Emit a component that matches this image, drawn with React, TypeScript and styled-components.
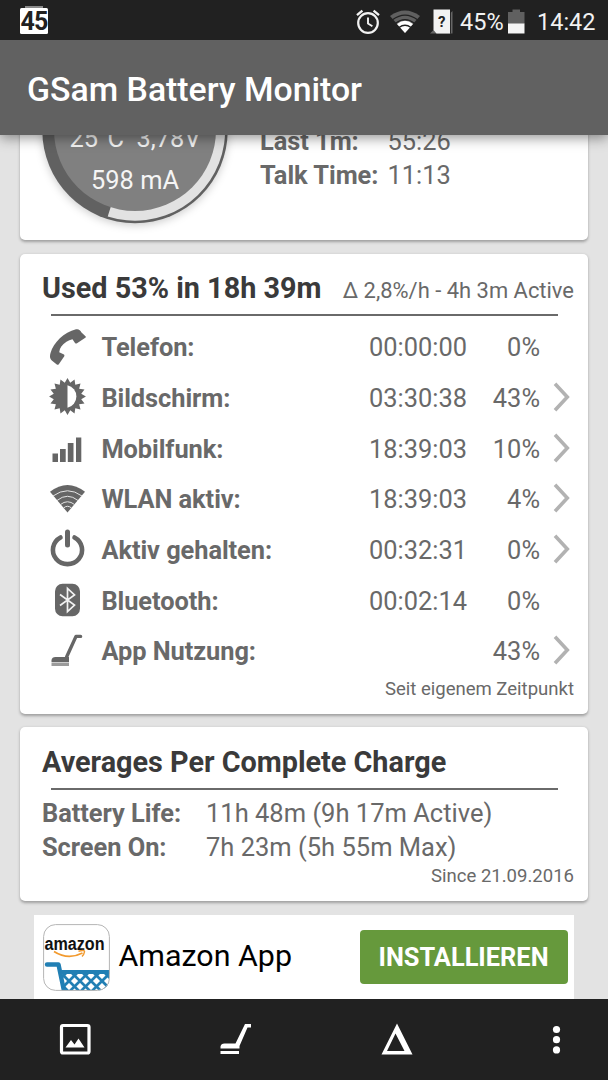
import React from "react";
import styled, { createGlobalStyle } from "styled-components";

const GlobalStyle = createGlobalStyle`
  * { box-sizing: border-box; }
  body { margin: 0; background: #e3e3e3; font-family: Roboto, "Noto Sans", sans-serif; }
  svg { display: block; flex: none; }
`;

const Screen = styled.div`
  width: 608px;
  height: 1080px;
  display: flex;
  flex-direction: column;
  overflow: hidden;
  background: #e3e3e3;
  color: #696969;
  white-space: nowrap;
`;

const StatusBar = styled.div`
  height: 40px;
  flex: none;
  display: flex;
  align-items: center;
  justify-content: space-between;
  padding: 3px 13px 0 20px;
  background: #212121;
  color: #f2f2f2;
  font-size: 23.5px;
  position: relative;
  z-index: 3;
`;

const StatusIcons = styled.div`
  display: flex;
  align-items: center;
`;

const StatusText = styled.span<{ $left: number; $width: number }>`
  margin-left: ${(p) => p.$left}px;
  width: ${(p) => p.$width}px;
  line-height: 36px;
`;

const LevelBadge = styled.div`
  width: 28px;
  height: 26px;
  margin-top: -1px;
  border-radius: 1.5px;
  background: #fff;
  color: #212121;
  font-size: 25px;
  line-height: 28px;
  font-weight: 700;
  text-align: center;
  letter-spacing: -0.8px;
  position: relative;
  &::before {
    content: "";
    position: absolute;
    left: 5px;
    top: -2px;
    width: 18px;
    height: 2px;
    background: #8a8a8a;
  }
`;

const AppBar = styled.header`
  height: 95px;
  flex: none;
  display: flex;
  align-items: center;
  padding: 3px 27px 0;
  background: #616161;
  color: #fff;
  font-size: 33.8px;
  font-weight: 500;
  box-shadow: 0 3px 12px rgba(0, 0, 0, 0.42);
  position: relative;
  z-index: 2;
`;

const Content = styled.main`
  height: 864px;
  flex: none;
  display: flex;
  flex-direction: column;
  padding: 0 20px;
`;

const Card = styled.section<{ $height: number; $gap: number }>`
  height: ${(p) => p.$height}px;
  margin-bottom: ${(p) => p.$gap}px;
  flex: none;
  border-radius: 5px;
  background: #fff;
  box-shadow: 0 1.5px 3px rgba(0, 0, 0, 0.3);
`;

const SummaryCard = styled(Card)`
  margin-top: -115px;
  padding: 17px 0 0 22px;
  display: flex;
`;

const Gauge = styled.div`
  width: 186px;
  height: 187px;
  position: relative;
  color: #f5f5f5;
`;

const GaugeReadings = styled.div`
  position: absolute;
  left: 0;
  right: 0;
  top: 80px;
  text-align: center;
  font-size: 25.4px;
  line-height: 42px;
  white-space: pre;
`;

const StatTable = styled.dl<{ $label: number; $size: number }>`
  margin: 0;
  display: grid;
  grid-template-columns: ${(p) => p.$label}px auto;
  grid-auto-rows: 34px;
  align-content: start;
  font-size: ${(p) => p.$size}px;
  line-height: 34px;
`;

const StatLabel = styled.dt`
  font-weight: 700;
  font-size: 25.4px;
  letter-spacing: -0.03px;
`;

const StatValue = styled.dd`
  margin: 0;
`;

const SummaryStats = styled(StatTable)`
  margin: 87px 0 0 32px;
`;

const CardHeading = styled.div<{ $top: number }>`
  height: 34px;
  margin: ${(p) => p.$top}px 14px 0 22px;
  display: flex;
  align-items: baseline;
  justify-content: space-between;
  line-height: 34px;
`;

const Title = styled.h2`
  margin: 0;
  font-size: 28.8px;
  font-weight: 700;
  color: #3a3a3a;
`;

const Rate = styled.span`
  font-size: 21.95px;
`;

const Divider = styled.div<{ $top: number }>`
  height: 2px;
  margin: ${(p) => p.$top}px 30.5px 0;
  background: #6a6a6a;
`;

const UsageList = styled.div`
  margin-top: 6px;
`;

const UsageRow = styled.div`
  height: 50.67px;
  padding-left: 29px;
  display: grid;
  grid-template-columns: 52.4px 226.1px 140px 72.5px 42px;
  align-items: center;
  font-size: 25.4px;
  line-height: 50px;
`;

const UsageName = styled.span`
  font-weight: 700;
  letter-spacing: -0.06px;
`;

const UsageTime = styled.span`
  text-align: right;
  padding-right: 0.5px;
`;

const UsagePercent = styled.span`
  text-align: right;
`;

const Trail = styled.span`
  padding-left: 13px;
`;

const Since = styled.div<{ $top: number }>`
  margin: ${(p) => p.$top}px 14px 0 0;
  text-align: right;
  font-size: 18.55px;
  line-height: 22px;
`;

const AverageStats = styled(StatTable)`
  margin: 6px 0 0 22px;
`;

const Ad = styled.div`
  height: 84px;
  flex: none;
  margin: 0 14px;
  padding: 0 6.5px 0 9px;
  display: flex;
  align-items: center;
  background: #fff;
  color: #000;
`;

const AdName = styled.span`
  flex: 1;
  margin-left: 8.5px;
  padding-bottom: 4px;
  font-size: 30.4px;
`;

const InstallButton = styled.button`
  width: 208px;
  height: 54px;
  margin-bottom: 1px;
  padding: 0;
  border: 0;
  border-radius: 4px;
  background: #66993c;
  color: #fff;
  font: 700 25.4px/54px Roboto, sans-serif;
`;

const BottomBar = styled.nav`
  height: 81px;
  flex: none;
  display: grid;
  grid-template-columns: 155px 161px 161px 1fr;
  align-items: center;
  background: #212121;
  position: relative;
  z-index: 2;
`;

const BarAction = styled.div<{ $left: number }>`
  padding-left: ${(p) => p.$left}px;
`;

const ICON = "#666";

const AlarmIcon = () => (
  <svg width="24" height="26" viewBox="0 0 24 26" fill="none" stroke="#f2f2f2">
    <circle cx="12" cy="14" r="9.8" strokeWidth="2.2" />
    <path d="M12 8.5v6l4.4 2.8" strokeWidth="1.9" />
    <path d="M1 6.2l5.4-4.5M23 6.2l-5.4-4.5" strokeWidth="2.4" />
  </svg>
);

const StatusWifiIcon = () => (
  <svg width="30" height="23" viewBox="0 0 30 23" style={{ marginLeft: 10 }}>
    <path d="M0 6Q15-5 30 6L15 23Z" fill="#606060" />
    <path d="M7 14Q15 7.500 23 14L15 23Z" fill="#fff" />
    <g fill="none" stroke="#212121" strokeWidth="1.300">
      <path d="M2.500 9.800Q15 .5 27.500 9.800M5.500 13.300Q15 6 24.500 13.300M9 17.500Q15 13 21 17.500" />
    </g>
  </svg>
);

const SimIcon = () => (
  <svg width="24" height="25" viewBox="0 0 24 25" style={{ marginLeft: 10 }}>
    <path d="M0 24.500L22.500 2V24.500Z" fill="#666" />
    <path d="M3.500 .5H20V24.500H6.500L3.500 21Z" fill="#f2f2f2" />
    <path d="M20.500 3v21.500" stroke="#212121" strokeWidth=".9" />
    <text x="11.700" y="17.500" fontSize="15" fontWeight="700" textAnchor="middle" fill="#212121">?</text>
  </svg>
);

const BatteryIcon = () => (
  <svg width="17" height="25" viewBox="0 0 17 25">
    <path d="M0 3H4.500V.5H12V3H16.500V15H0Z" fill="#606060" />
    <path d="M0 14.500H16.500V24.500H0Z" fill="#f5f5f5" />
  </svg>
);

const PhoneIcon = () => (
  <svg width="37" height="38" viewBox="0 0 37 38" fill={ICON}>
    <path d="M27 1.300C29.500.700 31.500 2 32.500 4.500L36.500 8.300Q37.200 9 36.300 9.800L28 15.300Q27 16 26 15L23.500 11.200Q17 12.500 12.300 18.500Q10.500 21 10.200 24.200L14.500 26.300Q15.800 27 15.300 28.300L9.800 36.300Q8.800 37.200 7.800 36.500L2.800 32.500C.7 30.500.6 28 1.600 24.800C4.500 15 15 4 27 1.300Z" />
  </svg>
);

const SCREEN_STAR = Array.from({ length: 32 }, (_, i) => {
  const a = (i * Math.PI) / 16 - Math.PI / 2;
  const r = i % 2 ? 14 : 18.4;
  return `${(18.5 + r * Math.cos(a)).toFixed(2)},${(18.5 + r * Math.sin(a)).toFixed(2)}`;
}).join(" ");

const BrightnessIcon = () => (
  <svg width="37" height="39" viewBox="0 0 37 39">
    <polygon points={SCREEN_STAR} fill={ICON} />
    <path d="M18.500 7.300A11.500 11.500 0 0 1 18.500 29.700Z" fill="#fff" />
  </svg>
);

const SignalIcon = () => (
  <svg width="37" height="26" viewBox="0 0 37 26" fill={ICON}>
    <path d="M3.500 17.500h5.500V26H3.500ZM11 13h5.700V26H11ZM18.800 7h5.700V26H18.800ZM27 1.500h5.300V26H27Z" />
  </svg>
);

const WifiIcon = () => (
  <svg width="37" height="31" viewBox="0 0 37 31">
    <path d="M1 7.800Q18.500-5.800 36 7.800L18.500 28.500Z" fill={ICON} />
    <g fill="none" stroke="#e4e4e4" strokeWidth="1">
      <path d="M4 12Q18.500 1.500 33 12M8 16.500Q18.500 8 29 16.500M11.500 20.500Q18.500 15 25.500 20.500M14.500 24Q18.500 20.500 22.500 24" />
    </g>
  </svg>
);

const PowerIcon = () => (
  <svg width="37" height="42" viewBox="0 0 37 42" fill="none" stroke={ICON} strokeLinecap="round">
    <path d="M11.500 8.500A14.600 14.200 0 1 0 25.500 8.500" strokeWidth="4.600" />
    <path d="M18.500 3v13" strokeWidth="5" />
  </svg>
);

const BluetoothIcon = () => (
  <svg width="37" height="36" viewBox="0 0 37 36">
    <rect x="6" y=".7" width="25" height="32.600" rx="7.500" fill={ICON} />
    <path d="M11 11.500L25.500 22L18.500 28.500V5.500L25.500 12L11 22.500" fill="none" stroke="#f2f2f2" strokeWidth="1.700" />
  </svg>
);

const VacuumIcon = () => (
  <svg width="37" height="36" viewBox="0 0 37 36" fill={ICON}>
    <path d="M31.600 3.400H27L17.600 24" fill="none" stroke={ICON} strokeWidth="3.400" strokeLinejoin="round" strokeLinecap="round" />
    <path d="M2.500 29V27Q3 24 6.500 24H20V29Z" />
    <path d="M2.500 29.500H20V33H2.500Z" opacity=".65" />
  </svg>
);

const ChevronIcon = () => (
  <svg width="17" height="32" viewBox="0 0 17 32" fill="none" stroke="#b2b2b2" strokeWidth="3.600">
    <path d="M2 1.700L14.300 15L2 28.300" />
  </svg>
);

const AmazonIcon = () => (
  <svg width="67" height="67" viewBox="0 0 67 67">
    <defs>
      <clipPath id="tile"><rect x=".5" y=".5" width="66" height="66" rx="12" /></clipPath>
      <clipPath id="basket"><path d="M18.500 46H66V67H22.500Z" /></clipPath>
    </defs>
    <rect x=".6" y=".6" width="65.800" height="65.800" rx="12" fill="#fff" />
    <text x="1.500" y="25.500" fontFamily="Liberation Sans, sans-serif" fontSize="18" fontWeight="700" textLength="60" lengthAdjust="spacingAndGlyphs" fill="#111">amazon</text>
    <path d="M11 27.500Q25 36.500 39.500 29" fill="none" stroke="#f29a2e" strokeWidth="1.700" />
    <path d="M35.500 27.200Q42 25.500 41.500 27.800Q41 30.500 39 32.500" fill="none" stroke="#f29a2e" strokeWidth="1.400" />
    <g clipPath="url(#tile)" fill="none" stroke="#217fb4">
      <path d="M4 40.500H15.500L21 67" strokeWidth="4.400" strokeLinecap="round" strokeLinejoin="round" />
      <path d="M17.500 48H67" strokeWidth="4.200" />
      <g clipPath="url(#basket)" strokeWidth="2.700">
        {[-7, 4, 15, 26, 37, 48, 59, 70].map((x) => (
          <path key={x} d={`M${x} 46l22 22M${x + 22} 46l-22 22`} />
        ))}
      </g>
    </g>
    <rect x=".6" y=".6" width="65.800" height="65.800" rx="12" fill="none" stroke="#b5b5b5" />
  </svg>
);

const GaugeDial = () => (
  <svg width="186" height="187" viewBox="0 0 186 187" style={{ overflow: "visible", filter: "drop-shadow(0 2px 4px rgba(0,0,0,.2))" }}>
    <circle cx="93" cy="93.500" r="92.700" fill="#616161" />
    <path d="M93 93.500L93 3.300A90.200 90.200 0 1 1 65.700 179.500Z" fill="#e2e2e2" />
    <circle cx="93" cy="93" r="81" fill="#808080" />
  </svg>
);

const usage = [
  { icon: <PhoneIcon />, name: "Telefon:", time: "00:00:00", percent: "0%", more: false },
  { icon: <BrightnessIcon />, name: "Bildschirm:", time: "03:30:38", percent: "43%", more: true },
  { icon: <SignalIcon />, name: "Mobilfunk:", time: "18:39:03", percent: "10%", more: true },
  { icon: <WifiIcon />, name: "WLAN aktiv:", time: "18:39:03", percent: "4%", more: true },
  { icon: <PowerIcon />, name: "Aktiv gehalten:", time: "00:32:31", percent: "0%", more: true },
  { icon: <BluetoothIcon />, name: "Bluetooth:", time: "00:02:14", percent: "0%", more: false },
  { icon: <VacuumIcon />, name: "App Nutzung:", time: "", percent: "43%", more: true },
];

export default function App() {
  return (
    <>
      <GlobalStyle />
      <Screen>
        <StatusBar>
          <LevelBadge>45</LevelBadge>
          <StatusIcons>
            <AlarmIcon />
            <StatusWifiIcon />
            <SimIcon />
            <StatusText $left={6} $width={48}>45%</StatusText>
            <BatteryIcon />
            <StatusText $left={12} $width={58}>14:42</StatusText>
          </StatusIcons>
        </StatusBar>
        <AppBar>GSam Battery Monitor</AppBar>
        <Content>
          <SummaryCard $height={220} $gap={14}>
            <Gauge>
              <GaugeDial />
              <GaugeReadings>{"25°C  3,78V\n598 mA"}</GaugeReadings>
            </Gauge>
            <SummaryStats $label={127.5} $size={25.4}>
              <StatLabel>Last 1m:</StatLabel>
              <StatValue>55:26</StatValue>
              <StatLabel>Talk Time:</StatLabel>
              <StatValue>11:13</StatValue>
            </SummaryStats>
          </SummaryCard>

          <Card $height={460} $gap={13}>
            <CardHeading $top={17}>
              <Title>Used 53% in 18h 39m</Title>
              <Rate>Δ 2,8%/h - 4h 3m Active</Rate>
            </CardHeading>
            <Divider $top={9} />
            <UsageList>
              {usage.map((row) => (
                <UsageRow key={row.name}>
                  {row.icon}
                  <UsageName>{row.name}</UsageName>
                  <UsageTime>{row.time}</UsageTime>
                  <UsagePercent>{row.percent}</UsagePercent>
                  <Trail>{row.more && <ChevronIcon />}</Trail>
                </UsageRow>
              ))}
            </UsageList>
            <Since $top={1}>Seit eigenem Zeitpunkt</Since>
          </Card>

          <Card $height={174} $gap={14}>
            <CardHeading $top={18}>
              <Title>Averages Per Complete Charge</Title>
            </CardHeading>
            <Divider $top={9} />
            <AverageStats $label={164} $size={25.5}>
              <StatLabel>Battery Life:</StatLabel>
              <StatValue>11h 48m (9h 17m Active)</StatValue>
              <StatLabel>Screen On:</StatLabel>
              <StatValue>7h 23m (5h 55m Max)</StatValue>
            </AverageStats>
            <Since $top={1}>Since 21.09.2016</Since>
          </Card>

          <Ad>
            <AmazonIcon />
            <AdName>Amazon App</AdName>
            <InstallButton>INSTALLIEREN</InstallButton>
          </Ad>
        </Content>

        <BottomBar>
          <BarAction $left={59}>
            <svg width="32" height="33" viewBox="0 0 32 33">
              <rect x="2.500" y="2.500" width="27.500" height="27.500" rx="1.500" fill="none" stroke="#fff" strokeWidth="3.200" />
              <path d="M6.500 24.500L12 17L15.500 21.500L19.500 15.500L25.500 24.500Z" fill="#fff" />
            </svg>
          </BarAction>
          <BarAction $left={65}>
            <svg width="32" height="33" viewBox="0 0 32 33" fill="#fff">
              <path d="M31 1V4.500H27.500L19.500 23V25.500H.5V23.500Q1 20.500 4.500 20.500H15.500L25 1ZM.5 28H19V31H.5Z" />
            </svg>
          </BarAction>
          <BarAction $left={65}>
            <svg width="32" height="33" viewBox="0 0 32 33" fill="#fff" fillRule="evenodd">
              <path d="M16 .5L31.500 31.500H.5ZM14.500 10.500L6 28H23.500Z" />
            </svg>
          </BarAction>
          <BarAction $left={75}>
            <svg width="9" height="30" viewBox="0 0 9 30" fill="#fff">
              <circle cx="4.500" cy="4.500" r="3.600" />
              <circle cx="4.500" cy="14.700" r="3.600" />
              <circle cx="4.500" cy="24.900" r="3.600" />
            </svg>
          </BarAction>
        </BottomBar>
      </Screen>
    </>
  );
}
